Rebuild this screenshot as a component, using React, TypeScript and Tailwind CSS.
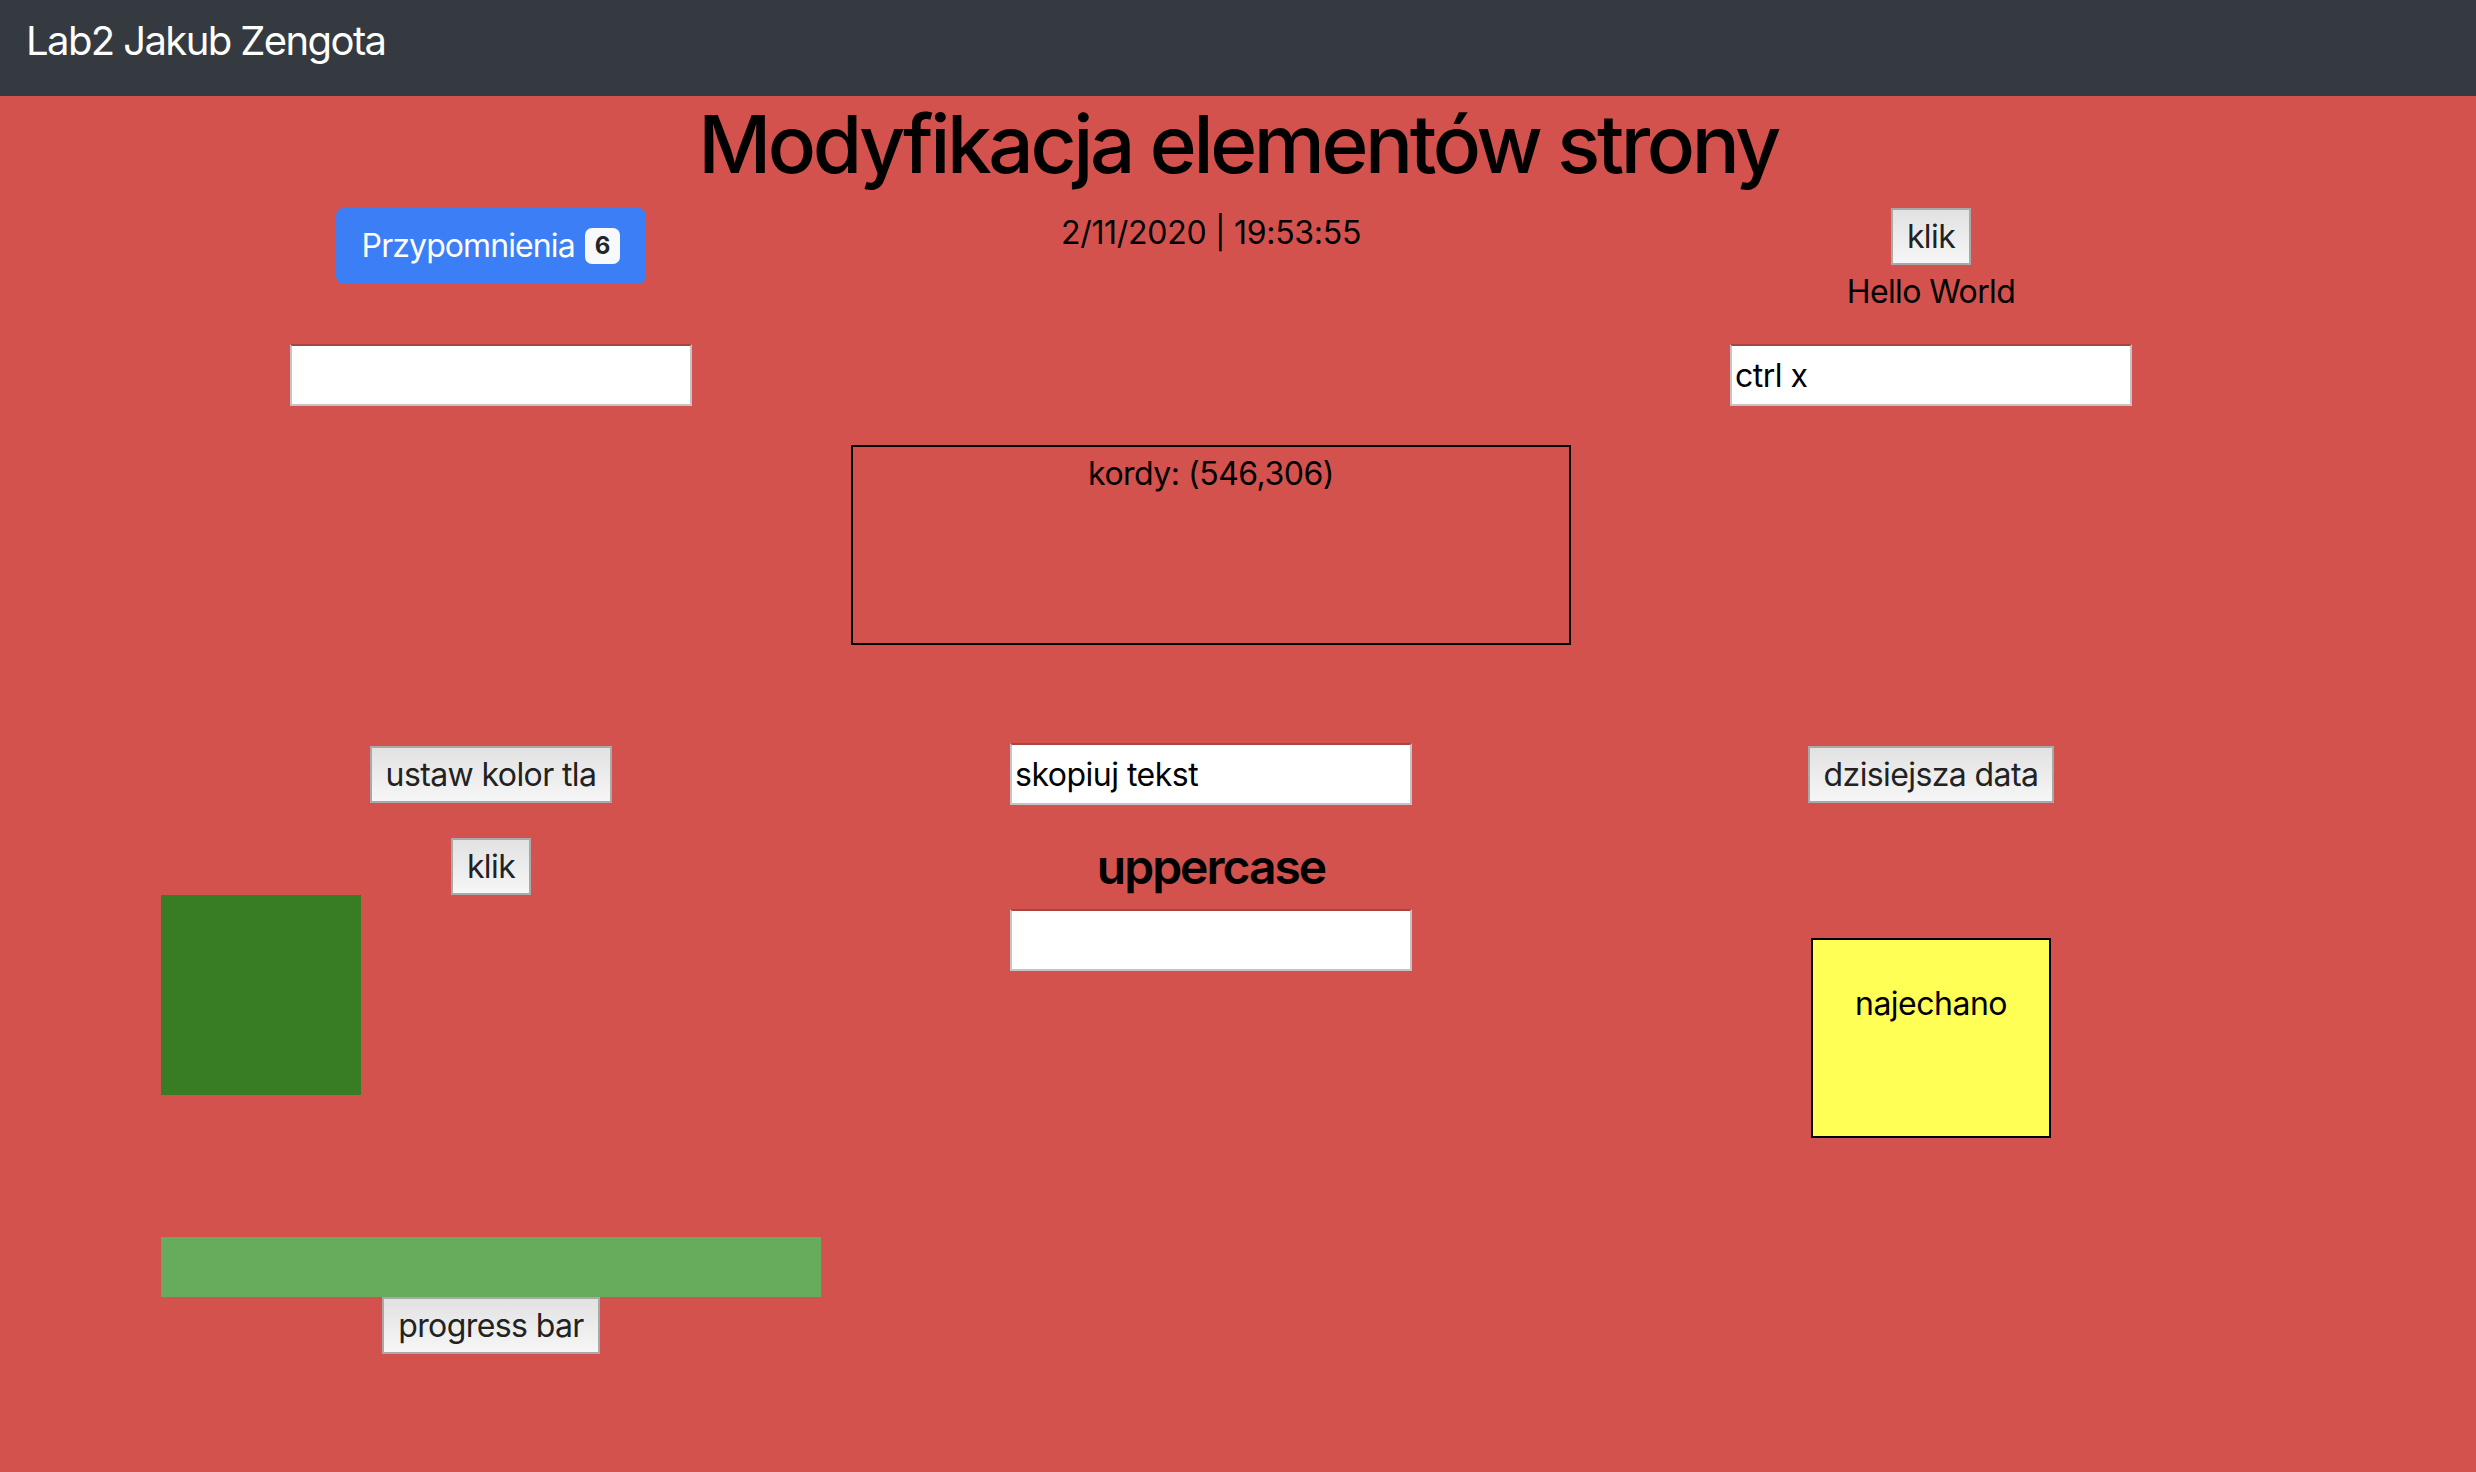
import React from 'react'

function GrayButton({ label, className = '' }: { label: string; className?: string }) {
    return (
        <button
            className={
                'h-[57px] px-[14px] border-2 border-[#a9a9a9] bg-linear-to-b from-[#e2e2e2] to-[#f6f6f6] text-[32px] leading-[40px] tracking-[-0.6px] text-[#222] ' +
                className
            }
        >
            {label}
        </button>
    )
}

function TextField({ value = '' }: { value?: string }) {
    return (
        <input
            readOnly
            value={value}
            className="w-[402px] h-[62px] bg-white px-[3px] text-[32px] tracking-[-0.5px] text-black border-2 border-[#c4c4c4] border-t-[#a9443f] outline-none"
        />
    )
}

export default function App() {
    return (
        <div className="min-h-screen bg-[#d3524d] font-['Inter','Noto_Sans',sans-serif] text-black">
            <nav className="h-[96px] bg-[#343a40] pl-[26px] pt-[21px] text-[40px] leading-[40px] tracking-[-1.6px] text-white">
                Lab2 Jakub Zengota
            </nav>

            <h1 className="text-center text-[80px] leading-[96px] font-medium tracking-[-3.4px] mb-[16px]">
                Modyfikacja elementów strony
            </h1>

            <div className="ml-[131px] w-[2160px]">
                <div className="grid grid-cols-3 items-start">
                    <div className="flex justify-center">
                        <button className="h-[76px] px-[24px] rounded-[8px] border-2 border-[#3b7ef6] bg-[#3b7ef6] text-white text-[32px] leading-[48px] tracking-[-0.9px] flex items-center gap-[10px]">
                            Przypomnienia
                            <span className="bg-[#f8f9fa] text-[#212529] font-bold text-[24px] leading-[24px] tracking-normal px-[10px] py-[6px] rounded-[7px]">
                                6
                            </span>
                        </button>
                    </div>
                    <div className="text-center text-[32px] leading-[48px] tracking-[-0.3px] mt-[1px]">
                        2/11/2020 | 19:53:55
                    </div>
                    <div className="flex flex-col items-center">
                        <GrayButton label="klik" />
                        <span className="mt-[3px] text-[32px] leading-[48px] tracking-[-0.6px]">Hello World</span>
                    </div>
                </div>

                <div className="grid grid-cols-3 mt-[28px]">
                    <div className="flex justify-center">
                        <TextField />
                    </div>
                    <div />
                    <div className="flex justify-center">
                        <TextField value="ctrl x" />
                    </div>
                </div>

                <div className="grid grid-cols-3 mt-[39px]">
                    <div />
                    <div className="h-[200px] border-2 border-black pt-[3px] text-center text-[32px] leading-[48px] tracking-[-0.5px]">
                        kordy: (546,306)
                    </div>
                    <div />
                </div>

                <div className="grid grid-cols-3 items-start mt-[98px]">
                    <div className="px-[30px] flex flex-col">
                        <GrayButton label="ustaw kolor tla" className="self-center mt-[3px]" />
                        <GrayButton label="klik" className="self-center mt-[35px]" />
                        <div className="w-[200px] h-[200px] bg-[#387d23]" />
                        <div className="w-full h-[60px] mt-[142px] bg-[#67ac5c]" />
                        <GrayButton label="progress bar" className="self-center" />
                    </div>

                    <div className="flex flex-col items-center">
                        <TextField value="skopiuj tekst" />
                        <h4 className="mt-[33px] mb-[13px] text-[48px] leading-[58px] font-semibold tracking-[-2px]">
                            uppercase
                        </h4>
                        <TextField />
                    </div>

                    <div className="flex flex-col items-center">
                        <GrayButton label="dzisiejsza data" className="mt-[3px]" />
                        <div className="mt-[135px] w-[240px] h-[200px] border-2 border-black bg-[#ffff55] pt-[40px] text-center text-[32px] leading-[48px] tracking-[-0.5px]">
                            najechano
                        </div>
                    </div>
                </div>
            </div>
        </div>
    )
}
